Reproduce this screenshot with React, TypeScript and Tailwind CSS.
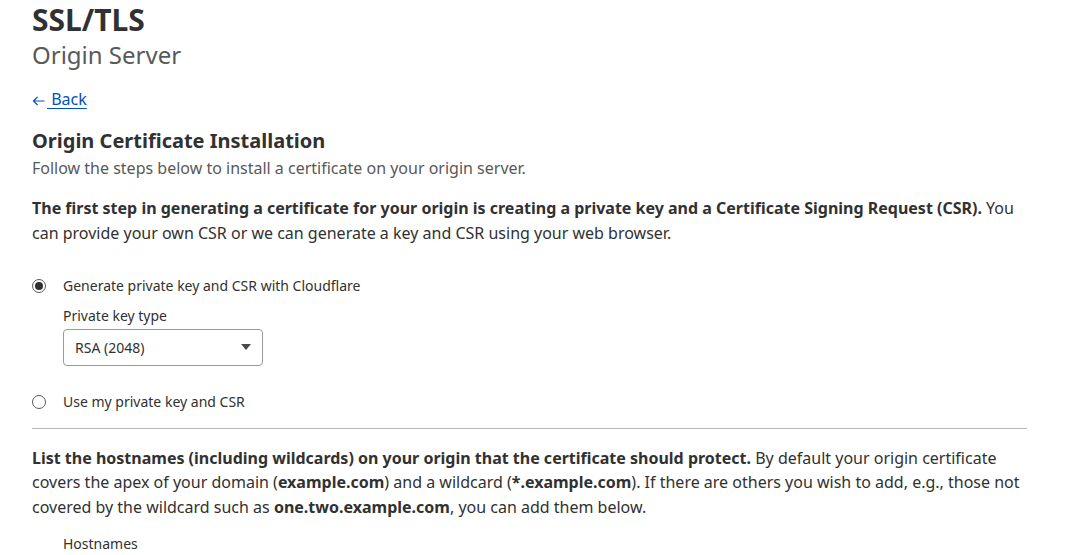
import React from "react";

export default function App() {
  return (
    <div className="min-h-screen w-full bg-white text-[#313131] font-['Noto_Sans',sans-serif]">
      <div className="px-8 w-[1058px]">
        {/* Page header */}
        <h1 className="text-[30px] font-bold leading-[38px] text-[#313131] pt-[1px]">SSL/TLS</h1>
        <h2 className="text-[24px] leading-[32px] text-[#595959]">Origin Server</h2>

        <a href="#" className="mt-[16px] inline-flex items-center text-[#0051c3] text-[16px] leading-[24px]">
          <svg width="14" height="14" viewBox="0 0 14 14" fill="none" stroke="currentColor" strokeWidth="1.2" className="mr-[1px] mt-[3px]">
            <path d="M12.5 7H1.5M5.5 3L1.5 7l4 4" />
          </svg>
          <span className="underline underline-offset-[3px]">&nbsp;Back</span>
        </a>

        <h3 className="mt-[13px] text-[20px] font-bold leading-[28px]">Origin Certificate Installation</h3>
        <p className="text-[16px] leading-[24px] text-[#595959] mt-[1px]">Follow the steps below to install a certificate on your origin server.</p>

        <p className="mt-[16px] text-[16px] leading-[25px]">
          <strong className="font-bold">
            The first step in generating a certificate for your origin is creating a private key and a Certificate Signing Request (CSR).
          </strong>{" "}
          You can provide your own CSR or we can generate a key and CSR using your web browser.
        </p>

        {/* Options */}
        <div className="mt-[30px] flex flex-col">
          <label className="flex items-center gap-[17px] text-[14px] leading-[20px]">
            <span className="w-[14px] h-[14px] rounded-full border border-[#5a5a5a] flex items-center justify-center">
              <span className="w-[8px] h-[8px] rounded-full bg-[#313131]" />
            </span>
            Generate private key and CSR with Cloudflare
          </label>
          <div className="pl-[31px] mt-[10px]">
            <div className="text-[14px] leading-[20px]">Private key type</div>
            <div className="mt-[3px] w-[200px] h-[37px] rounded-[4px] border border-[#9a9a9a] flex items-center justify-between pl-[11px] pr-[11px] text-[14px]">
              <span>RSA (2048)</span>
              <svg width="10" height="6" viewBox="0 0 10 6">
                <path d="M0 0h10L5 6z" fill="#4a4a4a" />
              </svg>
            </div>
          </div>
          <label className="mt-[26px] flex items-center gap-[17px] text-[14px] leading-[20px]">
            <span className="w-[14px] h-[14px] rounded-full border border-[#5a5a5a]" />
            Use my private key and CSR
          </label>
        </div>

        <div className="mt-[16px] border-t border-[#b7b7b7] w-[995px]" />

        <p className="mt-[17px] text-[16px] leading-[24.5px] w-[995px]">
          <strong className="font-bold">
            List the hostnames (including wildcards) on your origin that the certificate should protect.
          </strong>{" "}
          By default your origin certificate covers the apex of your domain (<strong className="font-bold">example.com</strong>) and a wildcard (
          <strong className="font-bold">*.example.com</strong>). If there are others you wish to add, e.g., those not covered by the wildcard such as{" "}
          <strong className="font-bold">one.two.example.com</strong>, you can add them below.
        </p>

        <div className="mt-[15px] pl-[31px] text-[14px] leading-[20px]">Hostnames</div>
      </div>
    </div>
  );
}
